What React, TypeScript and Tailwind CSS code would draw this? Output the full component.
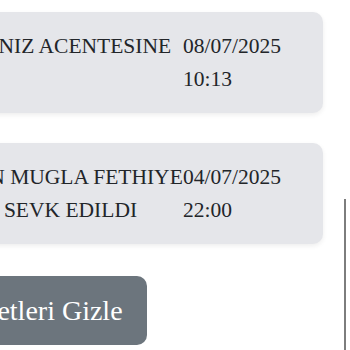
import React from "react";

const serif = { fontFamily: '"Liberation Serif", "Times New Roman", serif' };

function Card({ left, date, time }: { left: string[]; date: string; time: string }) {
  return (
    <div className="-ml-[42px] w-[365px] flex items-start rounded-[10px] bg-[#e5e6ea] pt-[18px] pb-[17px] shadow-[0_2px_5px_rgba(0,0,0,0.07)]">
      <div className="w-[225px] shrink-0 text-center text-[21.5px] leading-[33px] text-[#222529] whitespace-nowrap">
        {left.map((l, i) => (
          <div key={i}>{l}</div>
        ))}
      </div>
      <div className="flex-1 text-left text-[21.5px] leading-[33px] text-[#222529] whitespace-nowrap">
        <div>{date}</div>
        <div>{time}</div>
      </div>
    </div>
  );
}

export default function App() {
  return (
    <div className="relative w-[350px] h-[350px] overflow-hidden bg-white" style={serif}>
      <div className="flex flex-col pt-[12px]">
        <Card left={["DENIZ ACENTESINE"]} date="08/07/2025" time="10:13" />
        <div className="mt-[30px]">
          <Card left={["HAN MUGLA FETHIYE", "SEVK EDILDI"]} date="04/07/2025" time="22:00" />
        </div>
        <div className="mt-[32px] flex">
          <button className="-ml-[95px] h-[69px] flex items-center rounded-[10px] bg-[#6c757d] pl-[24px] pr-[24px] text-[28px] text-white whitespace-nowrap" style={serif}>
            Hareketleri Gizle
          </button>
        </div>
      </div>
      <div className="absolute left-[344px] top-[199px] w-[2px] h-[151px] bg-[#7d7d7d]" />
    </div>
  );
}
